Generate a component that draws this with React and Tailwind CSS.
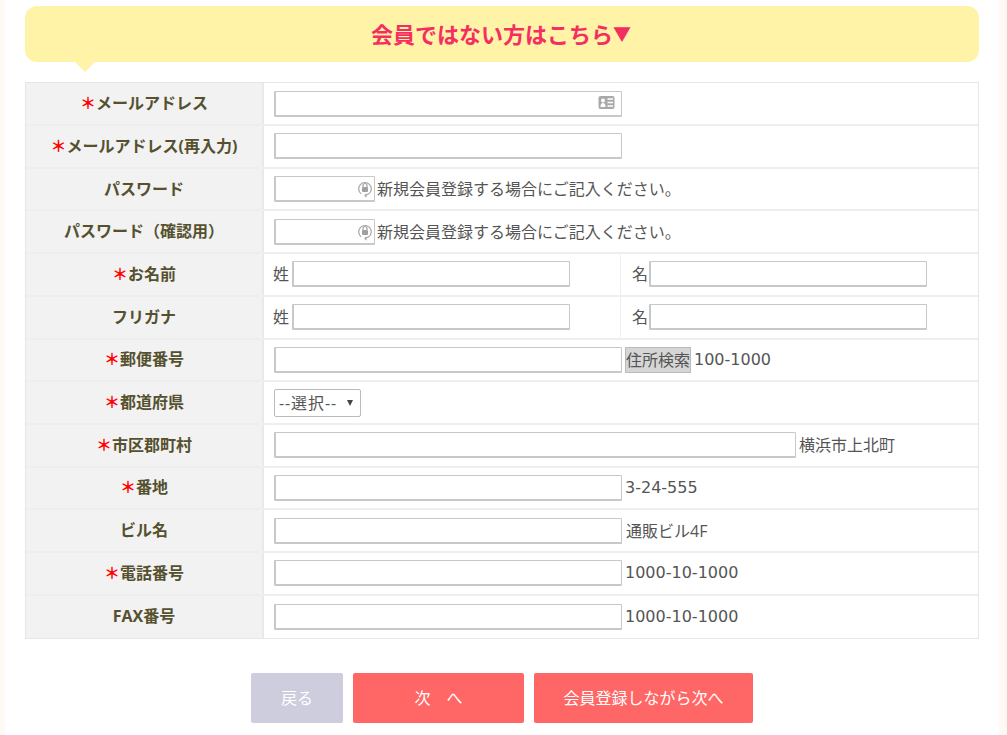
const FONT = `font-['Open_Sans','Noto_Sans_CJK_JP',sans-serif]`

const Field = ({ className = 'w-[348px]', children }) => (
  <div className={`relative h-[26px] shrink-0 bg-white border-2 border-t border-r border-[#c8c8c8] rounded-[1px] ${className}`}>
    {children}
  </div>
)

const Num = ({ children }) => (
  <span className="font-['DejaVu_Sans',sans-serif] text-[16px] text-[#555555]">{children}</span>
)

const CardIcon = () => (
  <svg className="absolute right-[6px] top-[3px]" width="17" height="15" viewBox="0 0 17 15">
    <rect x="0.5" y="1" width="16" height="13" rx="2" fill="#a9a9a9" />
    <circle cx="5" cy="5.5" r="2" fill="#fff" />
    <path d="M2.5 12 C2.5 9 3.5 8 5 8 C6.5 8 7.5 9 7.5 12 Z" fill="#fff" />
    <path d="M9.5 4h5.5M9.5 7.5h5.5M9.5 11h5.5" stroke="#fff" strokeWidth="1.4" />
  </svg>
)

const KeyIcon = () => (
  <svg className="absolute right-[1px] top-[3px]" width="16" height="18" viewBox="0 0 16 18" fill="none">
    <path d="M4.2 13.8 A6.3 6.3 0 1 1 11.8 13.8 L8 15.6" stroke="#a8a8a8" strokeWidth="1.2" />
    <path d="M9.5 13.8 L8 15.6 L9.5 17.2" stroke="#a8a8a8" strokeWidth="1.2" />
    <rect x="5" y="7" width="6" height="5" rx="1" fill="#a0a0a0" />
    <path d="M6 7V5.5a2 2 0 0 1 4 0V7" stroke="#a0a0a0" strokeWidth="1.2" />
  </svg>
)

const Row = ({ label, req, children, last }) => (
  <div className={`flex h-[42.7px] ${last ? '' : 'border-b-2 border-[#eeeeee]'}`}>
    <div className="w-[238px] shrink-0 flex items-center justify-center pb-[1px] bg-[#f2f2f2] border-r-2 border-[#e9e9e9] font-bold text-[#55512f]">
      {req && <span className="text-[#ff0000]">＊</span>}
      {label}
    </div>
    {children}
  </div>
)

const Cell = ({ children }) => (
  <div className="flex-1 flex items-center pl-[10px] gap-[3px] text-[#555555] leading-[24px]">{children}</div>
)

const NameCells = () => (
  <>
    <div className="w-[357px] h-full flex items-center pl-[9px] gap-[3px] text-[#555555] border-r border-[#eeeeee]">
      <span>姓</span>
      <Field className="w-[278px]" />
    </div>
    <div className="flex-1 flex items-center pl-[11px] gap-[1px] text-[#555555]">
      <span>名</span>
      <Field className="w-[278px]" />
    </div>
  </>
)

export default function App() {
  return (
    <div className={`h-[735px] overflow-hidden bg-[#fff9f3] pl-[5px] pr-[8px] text-[16px] ${FONT}`}>
      <div className="h-full bg-white px-[20px] pt-[6px]">
        <div className="relative h-[56px] pr-[2px] rounded-[12px] bg-[#fff3a8] flex items-center justify-center text-[22px] font-bold text-[#f52e62]">
          会員ではない方はこちら<span className="text-[18px]">▼</span>
          <div className="absolute left-[50px] top-full w-0 h-0 border-x-[10px] border-x-transparent border-t-[10px] border-t-[#fff3a8]" />
        </div>

        <div className="mt-[20.4px] border border-[#e6e6e6]">
          <Row label="メールアドレス" req>
            <Cell><Field><CardIcon /></Field></Cell>
          </Row>
          <Row label="メールアドレス(再入力)" req>
            <Cell><Field /></Cell>
          </Row>
          <Row label="パスワード">
            <Cell><Field className="w-[101px]"><KeyIcon /></Field><span className="-ml-[1px]">新規会員登録する場合にご記入ください。</span></Cell>
          </Row>
          <Row label="パスワード（確認用）">
            <Cell><Field className="w-[101px]"><KeyIcon /></Field><span className="-ml-[1px]">新規会員登録する場合にご記入ください。</span></Cell>
          </Row>
          <Row label="お名前" req><NameCells /></Row>
          <Row label="フリガナ"><NameCells /></Row>
          <Row label="郵便番号" req>
            <Cell>
              <Field />
              <button className="h-[26px] w-[66px] bg-[#d6d6d6] border border-[#bbbbbb] text-[#555555] text-[16px] whitespace-nowrap flex items-center justify-center">住所検索</button>
              <Num>100-1000</Num>
            </Cell>
          </Row>
          <Row label="都道府県" req>
            <Cell>
              <div className="h-[28px] w-[87px] border border-[#bbbbbb] rounded-[2px] bg-white flex items-center pl-[4px] text-[#555555] tracking-[0.9px]">
                --選択--
                <span className="ml-auto mr-[7px] w-0 h-0 border-x-[3px] border-x-transparent border-t-[6px] border-t-[#444444]" />
              </div>
            </Cell>
          </Row>
          <Row label="市区郡町村" req>
            <Cell><Field className="w-[522px]" /><span>横浜市上北町</span></Cell>
          </Row>
          <Row label="番地" req>
            <Cell><Field /><Num>3-24-555</Num></Cell>
          </Row>
          <Row label="ビル名">
            <Cell><Field /><span className="ml-[1px]">通販ビル4F</span></Cell>
          </Row>
          <Row label="電話番号" req>
            <Cell><Field /><Num>1000-10-1000</Num></Cell>
          </Row>
          <Row label="FAX番号" last>
            <Cell><Field /><Num>1000-10-1000</Num></Cell>
          </Row>
        </div>

        <div className="mt-[33.6px] flex justify-center gap-[10px] text-white">
          <button className="w-[92px] h-[50px] rounded-[2px] bg-[#cdcddd]">戻る</button>
          <button className="w-[171px] h-[50px] rounded-[2px] bg-[#ff6666]">次　へ</button>
          <button className="w-[219px] h-[50px] rounded-[2px] bg-[#ff6666]">会員登録しながら次へ</button>
        </div>
      </div>
    </div>
  )
}
